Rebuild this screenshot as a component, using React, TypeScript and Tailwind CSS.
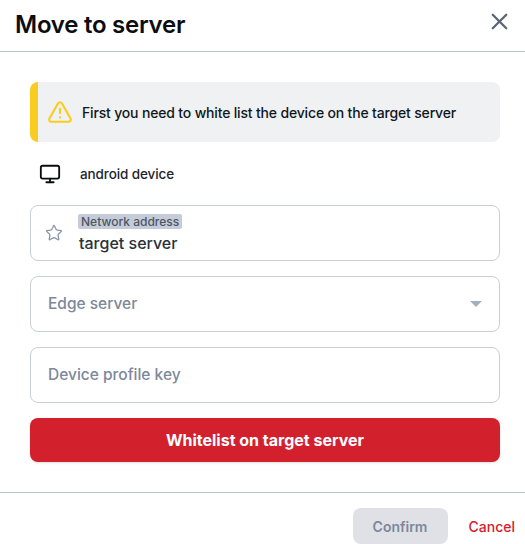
import { Monitor, Star, TriangleAlert, X } from "lucide-react";

const App = () => {
  return (
    <div className="w-[525px] h-[544px] overflow-hidden bg-white font-['Inter',sans-serif]">
      <header className="h-[52px] flex items-center justify-between pl-[15px] pr-[12px] border-b border-[#bfc3cd]">
        <h1 className="text-[24px] leading-[32px] tracking-[-0.25px] font-semibold text-[#0b0d10] -mt-[2px]">Move to server</h1>
        <X className="h-[27px] w-[27px] text-[#5b6675] -mt-[9px]" strokeWidth={2} />
      </header>

      <main className="pl-[30px] pr-[25px] pt-[30px]">
        <div className="h-[60px] flex items-center gap-[9px] rounded-[8px] border-l-[8px] border-[#facc1f] bg-[#f0f1f3] pl-[9px]">
          <TriangleAlert className="h-[26px] w-[26px] text-[#facc1f]" strokeWidth={2} />
          <p className="text-[14px] tracking-[-0.17px] font-medium text-[#0f1720]">
            First you need to white list the device on the target server
          </p>
        </div>

        <div className="h-[63px] flex items-center gap-[19px] pl-[9px]">
          <Monitor className="h-[22px] w-[22px] text-[#0b0d10]" strokeWidth={2} />
          <span className="mt-[1px] text-[13.5px] tracking-[-0.1px] font-medium text-[#1d2530]">android device</span>
        </div>

        <div className="flex flex-col gap-[15px]">
          <div className="h-[56px] flex items-center rounded-[8px] border border-[#c9ced8] pl-[14px]">
            <Star className="h-[18px] w-[18px] text-[#8b97a8]" strokeWidth={1.75} />
            <div className="ml-[15px] flex flex-col items-start">
              <span className="bg-[#c5ccd8] rounded-[2px] px-[3px] text-[12px] leading-[15px] font-medium text-[#4c5665]">
                Network address
              </span>
              <span className="ml-[1px] mt-[4px] text-[16px] leading-[20px] font-medium text-[#2a3039]">target server</span>
            </div>
          </div>

          <div className="h-[56px] flex items-center justify-between rounded-[8px] border border-[#c9ced8] pl-[17px] pr-[17px]">
            <span className="text-[15.5px] font-medium text-[#7c889b]">Edge server</span>
            <span className="h-0 w-0 border-x-[6px] border-t-[6px] border-x-transparent border-t-[#a3aec0]" />
          </div>

          <div className="h-[56px] flex items-center rounded-[8px] border border-[#c9ced8] pl-[17px]">
            <span className="text-[15.5px] font-medium text-[#7c889b]">Device profile key</span>
          </div>

          <button className="h-[44px] rounded-[8px] bg-[#d3202d] text-[16px] font-bold text-white shadow-sm">
            Whitelist on target server
          </button>
        </div>
      </main>

      <footer className="mt-[30px] border-t border-[#bfc3cd] pt-[15px] pr-[10px] flex items-start justify-end gap-[21px]">
        <button className="h-[36px] w-[95px] rounded-[8px] bg-[#dfe1e6] text-[14px] font-semibold text-[#7c889b]">Confirm</button>
        <button className="h-[36px] text-[14px] font-medium text-[#d3202d]">Cancel</button>
      </footer>
    </div>
  );
};

export default App;
